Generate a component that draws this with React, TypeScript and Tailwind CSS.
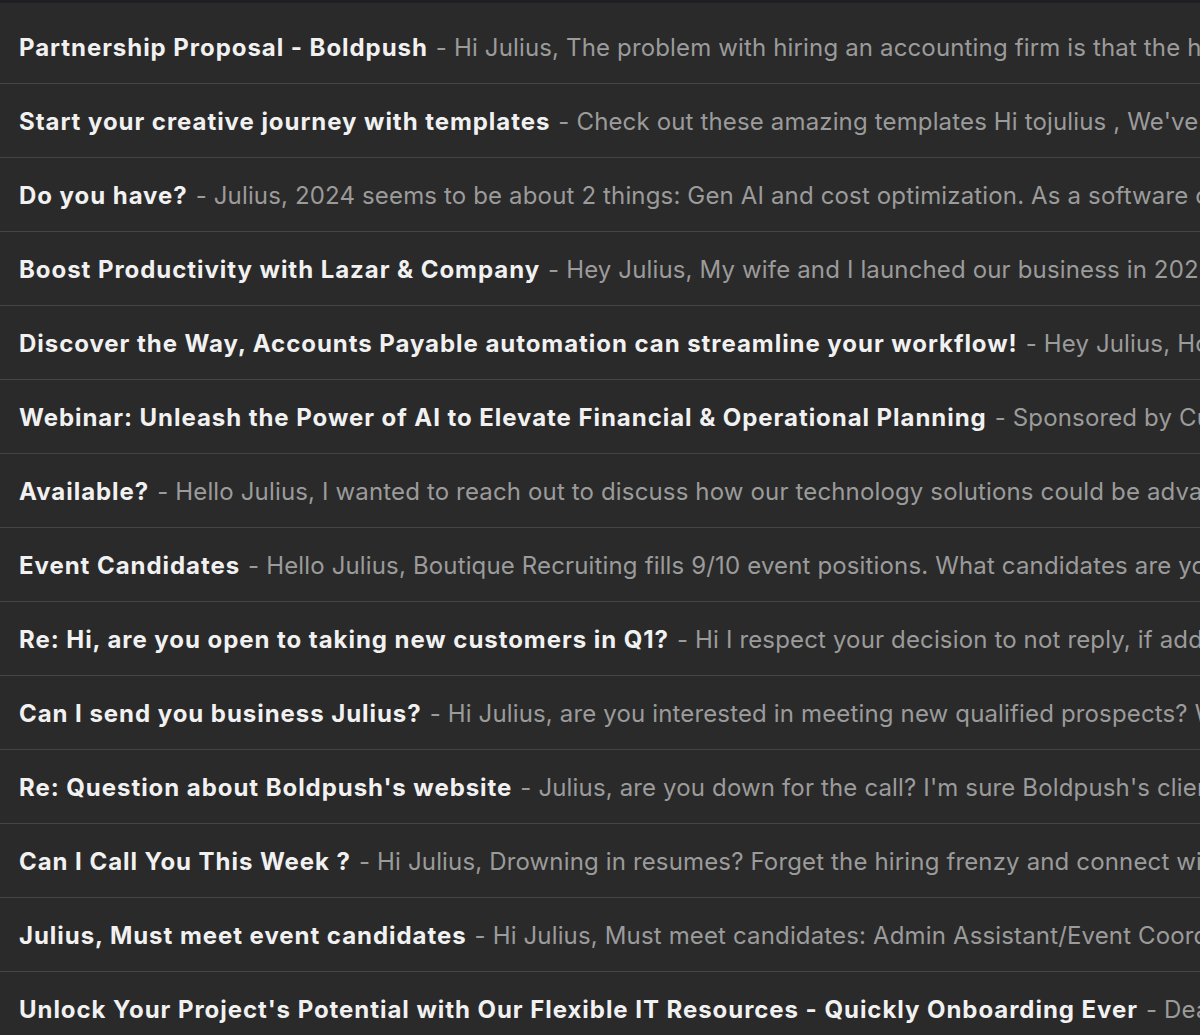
const emails: { subject: string; snippet: string }[] = [
  {
    subject: "Partnership Proposal - Boldpush",
    snippet: "Hi Julius, The problem with hiring an accounting firm is that the hourly",
  },
  {
    subject: "Start your creative journey with templates",
    snippet: "Check out these amazing templates Hi tojulius , We've picked",
  },
  {
    subject: "Do you have?",
    snippet: "Julius, 2024 seems to be about 2 things: Gen AI and cost optimization. As a software company",
  },
  {
    subject: "Boost Productivity with Lazar & Company",
    snippet: "Hey Julius, My wife and I launched our business in 2020 and",
  },
  {
    subject: "Discover the Way, Accounts Payable automation can streamline your workflow!",
    snippet: "Hey Julius, How are",
  },
  {
    subject: "Webinar: Unleash the Power of AI to Elevate Financial & Operational Planning",
    snippet: "Sponsored by Cube",
  },
  {
    subject: "Available?",
    snippet: "Hello Julius, I wanted to reach out to discuss how our technology solutions could be advantageous",
  },
  {
    subject: "Event Candidates",
    snippet: "Hello Julius, Boutique Recruiting fills 9/10 event positions. What candidates are you",
  },
  {
    subject: "Re: Hi, are you open to taking new customers in Q1?",
    snippet: "Hi I respect your decision to not reply, if addressed",
  },
  {
    subject: "Can I send you business Julius?",
    snippet: "Hi Julius, are you interested in meeting new qualified prospects? We",
  },
  {
    subject: "Re: Question about Boldpush's website",
    snippet: "Julius, are you down for the call? I'm sure Boldpush's clients",
  },
  {
    subject: "Can I Call You This Week ?",
    snippet: "Hi Julius, Drowning in resumes? Forget the hiring frenzy and connect with",
  },
  {
    subject: "Julius, Must meet event candidates",
    snippet: "Hi Julius, Must meet candidates: Admin Assistant/Event Coordinator",
  },
  {
    subject: "Unlock Your Project's Potential with Our Flexible IT Resources - Quickly Onboarding Ever",
    snippet: "Dear Julius",
  },
];

export default function App() {
  return (
    <div className="h-[1035px] w-[1200px] overflow-hidden bg-[#2a2a2a] font-['Inter',sans-serif]">
      <div className="h-[3px] bg-[#1e1f22]" />
      <ul className="pt-[7px]">
        {emails.map((e) => (
          <li
            key={e.subject}
            className="flex h-[74px] items-center overflow-hidden whitespace-nowrap border-b border-[#454545] pl-[19px] pt-[2px] text-[24px] leading-none"
          >
            <span className="font-bold tracking-[0.95px] text-[#f1f1f1]">{e.subject}</span>
            <span className="ml-[8px] tracking-[0.15px] text-[#9b9b9b]">- {e.snippet}</span>
          </li>
        ))}
      </ul>
    </div>
  );
}
